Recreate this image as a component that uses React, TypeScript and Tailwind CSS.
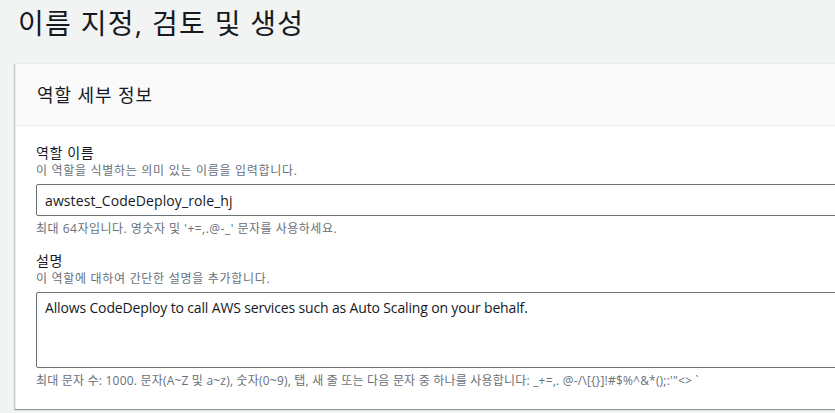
import React from 'react';

const font = { fontFamily: '"Open Sans", "Noto Sans CJK KR", sans-serif' };

const Field: React.FC<{ label: string; desc: string; hint: string; hintClass: string; children: React.ReactNode }> = ({ label, desc, hint, hintClass, children }) => (
  <div className="flex flex-col">
    <span className="text-[14px] leading-[20px] tracking-[0.6px] text-[#16191f]">{label}</span>
    <span className="text-[12px] leading-[16px] tracking-[0.7px] text-[#687078]">{desc}</span>
    <div className="mt-[5px]">{children}</div>
    <span className={`mt-[5px] text-[12px] leading-[16px] text-[#687078] ${hintClass}`}>{hint}</span>
  </div>
);

export default function App() {
  return (
    <div className="w-[835px] h-[413px] overflow-hidden bg-[#f2f3f3]" style={font}>
      <h1 className="pl-[18px] pt-[3px] h-[63px] text-[28px] leading-[40px] tracking-[1.3px] font-normal text-[#16191f]">
        이름 지정, 검토 및 생성
      </h1>
      <div className="ml-[15px] w-[1000px] bg-white border-t border-l border-[#eaeded] shadow-[0_1px_1px_0_rgba(0,28,36,0.3),-1px_1px_1px_0_rgba(0,28,36,0.15)]">
        <div className="h-[62px] bg-[#fafafa] border-b border-[#eaeded] pl-[21px] flex items-center">
          <span className="text-[18px] leading-[24px] tracking-[0.9px] text-[#16191f]">역할 세부 정보</span>
        </div>
        <div className="pl-[20px] pt-[17px] pb-[20px] flex flex-col gap-[14px]">
          <Field
            label="역할 이름"
            desc="이 역할을 식별하는 의미 있는 이름을 입력합니다."
            hint="최대 64자입니다. 영숫자 및 '+=,.@-_' 문자를 사용하세요."
            hintClass="tracking-[0.5px]"
          >
            <div className="h-[32px] border border-[#687078] rounded-[2px] bg-white px-[8px] flex items-center text-[14px] tracking-[0.1px] text-[#16191f]">
              awstest_CodeDeploy_role_hj
            </div>
          </Field>
          <Field
            label="설명"
            desc="이 역할에 대하여 간단한 설명을 추가합니다."
            hint="최대 문자 수: 1000. 문자(A~Z 및 a~z), 숫자(0~9), 탭, 새 줄 또는 다음 문자 중 하나를 사용합니다: _+=,. @-/\[{}]!#$%^&*();:'&quot;<> `"
            hintClass="tracking-[0.2px]"
          >
            <div className="h-[76px] border border-[#687078] rounded-[2px] bg-white px-[8px] pt-[5px] text-[14px] leading-[20px] tracking-[-0.15px] text-[#16191f]">
              Allows CodeDeploy to call AWS services such as Auto Scaling on your behalf.
            </div>
          </Field>
        </div>
      </div>
    </div>
  );
}
